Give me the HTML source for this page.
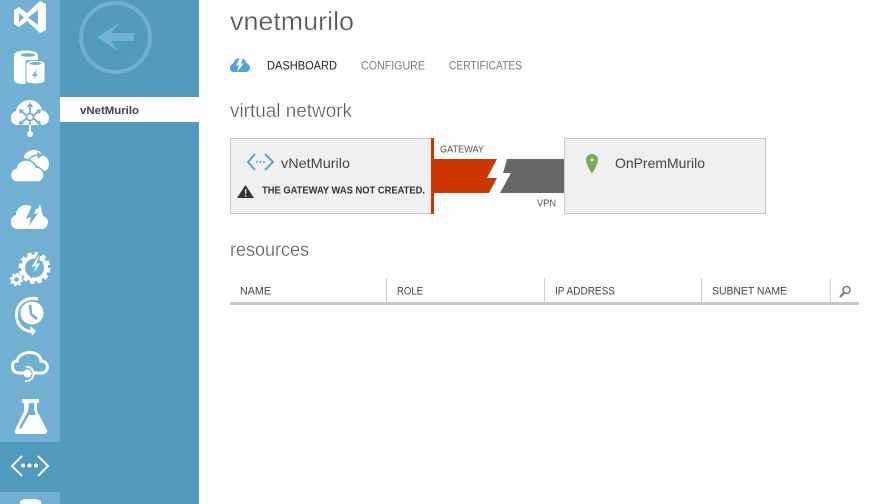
<!DOCTYPE html>
<html><head><meta charset="utf-8"><style>
html,body{margin:0;padding:0;background:#fff;width:879px;height:504px;overflow:hidden}
svg{display:block}
text{font-family:"Liberation Sans",sans-serif}
.t{stroke:#fff;stroke-width:.35px;paint-order:normal}
</style></head><body>
<svg width="879" height="504" viewBox="0 0 879 504" xmlns="http://www.w3.org/2000/svg">
<rect x="0" y="0" width="60" height="504" fill="#72b0d3"/>
<rect x="0" y="442" width="60" height="50" fill="#519abd"/>
<rect x="60" y="0" width="139" height="504" fill="#519abd"/>
<circle cx="115.500" cy="37.500" r="34.500" fill="none" stroke="#70afd2" stroke-width="4"/>
<path d="M97,37 L119,23 L111,33 H134 V41 H111 L119,52 Z" fill="#74b2d5"/>
<rect x="60" y="97" width="139" height="25" fill="#fff"/>
<text x="80" y="114" font-size="11" font-weight="bold" fill="#3a4450" textLength="59" lengthAdjust="spacingAndGlyphs">vNetMurilo</text>

<!-- VS -->
<path fill-rule="evenodd" fill="#fff" d="M14,10 L19,7 L27,13 L40,1 L46,4 V30 L40,33 L27,21 L19,27 L14,24 Z M38,10 L28,17.500 L38,25 Z M19,13 V22 L24,17.500 Z"/>
<!-- DB -->
<path fill="#fff" d="M14,55 C14,49 38,49 38,55 V60 H26 V84 C20,84 14,83 14,81 Z"/>
<ellipse cx="28" cy="55" rx="7" ry="1.800" fill="#72b0d3"/>
<path fill="#fff" stroke="#72b0d3" stroke-width="1" d="M26,64 C26,59 45,59 45,64 V81 C45,85 26,85 26,81 Z"/>
<ellipse cx="35.500" cy="63.500" rx="6" ry="1.500" fill="#72b0d3"/>
<path fill="#72b0d3" d="M37,69 L32,76 H35 L33,80 L38,74 H35.500 Z"/>
<!-- network cloud -->
<path fill="#fff" d="M18,125 C13,125 11,122 11,118 C11,114 13,112 16,111 C17,105 23,100 30,100 C36,100 41,105 42,110 C46,111 49,114 49,118 C49,122 46,125 42,125 Z"/>
<g stroke="#72b0d3" fill="none" stroke-width="1.800"><circle cx="30" cy="117" r="3.500"/><path d="M30,113 V105 M30,121 V125 M26,115 L21,111 M34,115 L39,111 M26,119 L21,123 M34,119 L39,123"/></g>
<path fill="#72b0d3" d="M30,102.500 L26.500,107 H33.500 Z M19,109 L24,110 L20,114 Z M41,109 L36,110 L40,114 Z M19,125 L24,124 L20,120 Z M41,125 L36,124 L40,120 Z"/>
<rect x="29" y="125" width="2" height="7" fill="#fff"/><circle cx="30" cy="134" r="3" fill="#fff"/>
<!-- two clouds -->
<path fill="#fff" d="M24,158 C24,153 29,150 34,150 C38,150 41,152 42,155 C46,156 49,160 49,164 C49,168 47,171 44,171 L30,160 Z"/>
<path fill="#fff" stroke="#72b0d3" stroke-width="1.500" d="M17,182 C13,182 10.500,179 10.500,175 C10.500,171 13,169 16,168 C17,163 21,160 26,160 C31,160 35,163 36,167 C40,167 44,171 44,175 C44,179 41,182 38,182 Z"/>
<path fill="none" stroke="#72b0d3" stroke-width="1.500" d="M28,160 C31,157 35,155 38,155"/><path fill="#72b0d3" d="M37,152 L43,155 L38,159 Z"/>
<!-- bolt cloud -->
<path fill="#fff" d="M18,229 C13,229 11,226 11,222 C11,218 13,216 16,215 C16,209 21,205 26,205 C29,205 31,206 33,208 L38,209 L40,204 L43,216 C46,217 48,219 48,222 C48,226 45,229 42,229 Z"/>
<path fill="#72b0d3" d="M33,203 L26,219 L31,217 L29,226 L38,213 L34,214 L37,206 Z"/>
<!-- gears -->
<circle cx="34.500" cy="268" r="11.500" fill="none" stroke="#fff" stroke-width="4"/>
<circle cx="34.500" cy="268" r="14.500" fill="none" stroke="#fff" stroke-width="3" stroke-dasharray="4.400 3.200"/>
<path fill="#fff" stroke="#72b0d3" stroke-width="1.500" d="M41.500,249 L30,268 L35,267 L31,278 L42,262 L37.500,263 Z"/>
<circle cx="16.500" cy="279.500" r="3.800" fill="none" stroke="#fff" stroke-width="3"/>
<circle cx="16.500" cy="279.500" r="5.500" fill="none" stroke="#fff" stroke-width="2.500" stroke-dasharray="2.200 2.100"/>
<!-- clock -->
<path fill="none" stroke="#fff" stroke-width="3" d="M38,299 C26,296 16,304 16.500,316 C17,325 23,331 32,331.500"/>
<path fill="#fff" d="M30,326 L36,331 L32,336 Z"/>
<circle cx="32" cy="313" r="11.500" fill="#fff"/>
<path fill="none" stroke="#72b0d3" stroke-width="2.500" d="M30,305 L31,314 L37,319"/>
<!-- outline cloud -->
<path fill="none" stroke="#fff" stroke-width="3" d="M25,373 H19 C15,373 12.500,370 12.500,367 C12.500,363 14,361 17,361 C18,356 23,352.500 30,352.500 C36,352.500 41,356 41,361 C45,361 47.500,364 47.500,367 C47.500,370 45,373 42,373 H34"/>
<circle cx="27.500" cy="373.500" r="4" fill="#fff"/>
<path fill="none" stroke="#fff" stroke-width="2" d="M26,367 C30,366 34,370 33.500,374 C33,379 29,382 25,381"/>
<!-- flask -->
<path fill="#fff" d="M22,399 H39 V403 H37 V411 L47,430 C48,432 46,434 44,434 H17 C15,434 14,432 15,430 L24,411 V403 H22 Z"/>
<path fill="#72b0d3" d="M29,403 H34 V410 L36,415 H29 L21,429 L19,428 L28,411 Z"/>
<!-- network selected -->
<path fill="none" stroke="#fff" stroke-width="2" d="M22,456 L12,466 L22,476 M38,456 L48,466 L38,476"/>
<circle cx="23" cy="465.500" r="2" fill="#fff"/><circle cx="29.500" cy="465.500" r="2" fill="#fff"/><circle cx="36" cy="465.500" r="2" fill="#fff"/>
<!-- bottom -->
<path fill="#fff" d="M20,504 V501 L24,499 H36 L41,501 V504 Z"/>

<!-- Main -->
<text class="t" x="230" y="30" font-size="26" fill="#555" textLength="124" lengthAdjust="spacingAndGlyphs">vnetmurilo</text>
<path fill="#50a0dc" d="M234,72 C231,72 230,70 230,68 C230,66 231,64 233,64 C234,60 237,58 240,58 C243,58 246,60 246,63 C249,64 250,66 250,68 C250,70 248,72 246,72 Z"/>
<path fill="#fff" d="M240,57 L236,66 L239,65 L237,72 L244,63 L241,64 L243,58 Z"/>
<text x="267" y="69.500" font-size="12" fill="#222" textLength="70" lengthAdjust="spacingAndGlyphs">DASHBOARD</text>
<text x="361" y="69.500" font-size="12" fill="#7a7a7a" textLength="64" lengthAdjust="spacingAndGlyphs">CONFIGURE</text>
<text x="449" y="69.500" font-size="12" fill="#7a7a7a" textLength="73" lengthAdjust="spacingAndGlyphs">CERTIFICATES</text>
<text class="t" x="230" y="117" font-size="19" fill="#555" textLength="122" lengthAdjust="spacingAndGlyphs">virtual network</text>

<rect x="230.500" y="138.500" width="202" height="75" fill="#f0f0f0" stroke="#c8c8c8"/>
<rect x="431" y="138" width="3" height="76" fill="#cc3700"/>
<path fill="none" stroke="#5aa3da" stroke-width="2" d="M255,154 L248,162 L255,170 M265,154 L273,162 L265,170"/>
<circle cx="257" cy="162" r="1" fill="#5aa3da"/><circle cx="260.500" cy="162" r="1" fill="#5aa3da"/><circle cx="264" cy="162" r="1" fill="#5aa3da"/>
<text x="281" y="168" font-size="14" fill="#444" textLength="69" lengthAdjust="spacingAndGlyphs">vNetMurilo</text>
<path fill="#333" d="M245.500,185 L254,198 H237 Z"/>
<rect x="245" y="189" width="1.400" height="5" fill="#f0f0f0"/><rect x="245" y="195" width="1.400" height="1.500" fill="#f0f0f0"/>
<text x="262" y="193.500" font-size="10" font-weight="bold" fill="#333" textLength="163" lengthAdjust="spacingAndGlyphs">THE GATEWAY WAS NOT CREATED.</text>

<text x="440" y="152.500" font-size="10" fill="#555" textLength="44" lengthAdjust="spacingAndGlyphs">GATEWAY</text>
<path fill="#cc3700" d="M434,159 H497 L487,178 H497 L489,193 H434 Z"/>
<path fill="#666" d="M507,159 H564 V193 H500 L511,173 H503 Z"/>
<text x="537" y="206.500" font-size="10" fill="#555" textLength="19" lengthAdjust="spacingAndGlyphs">VPN</text>

<rect x="564.500" y="138.500" width="201" height="75" fill="#f0f0f0" stroke="#c8c8c8"/>
<path fill="#7fa856" d="M592,154 C588.500,154 586,156.500 586,160 C586,164 590,170 592,174 C594,170 598,164 598,160 C598,156.500 595.500,154 592,154 Z"/>
<circle cx="592" cy="160" r="1.500" fill="#f0f0f0"/>
<text x="615" y="168" font-size="14" fill="#444" textLength="90" lengthAdjust="spacingAndGlyphs">OnPremMurilo</text>

<text class="t" x="230" y="256" font-size="19" fill="#555" textLength="79" lengthAdjust="spacingAndGlyphs">resources</text>
<g font-size="11" fill="#444">
<text x="240" y="294.500" textLength="31" lengthAdjust="spacingAndGlyphs">NAME</text>
<text x="397" y="294.500" textLength="26" lengthAdjust="spacingAndGlyphs">ROLE</text>
<text x="555" y="294.500" textLength="60" lengthAdjust="spacingAndGlyphs">IP ADDRESS</text>
<text x="712" y="294.500" textLength="75" lengthAdjust="spacingAndGlyphs">SUBNET NAME</text>
</g>
<g fill="#d0d0d0"><rect x="386" y="278" width="1" height="24"/><rect x="544" y="278" width="1" height="24"/><rect x="701" y="278" width="1" height="24"/><rect x="830" y="278" width="1" height="24"/></g>
<rect x="230" y="302" width="629" height="3" fill="#c8c8c8"/>
<circle cx="846.500" cy="290" r="3.500" fill="none" stroke="#777" stroke-width="1.500"/>
<path d="M844,293 L840,297" stroke="#777" stroke-width="2"/>
</svg>
</body></html>
